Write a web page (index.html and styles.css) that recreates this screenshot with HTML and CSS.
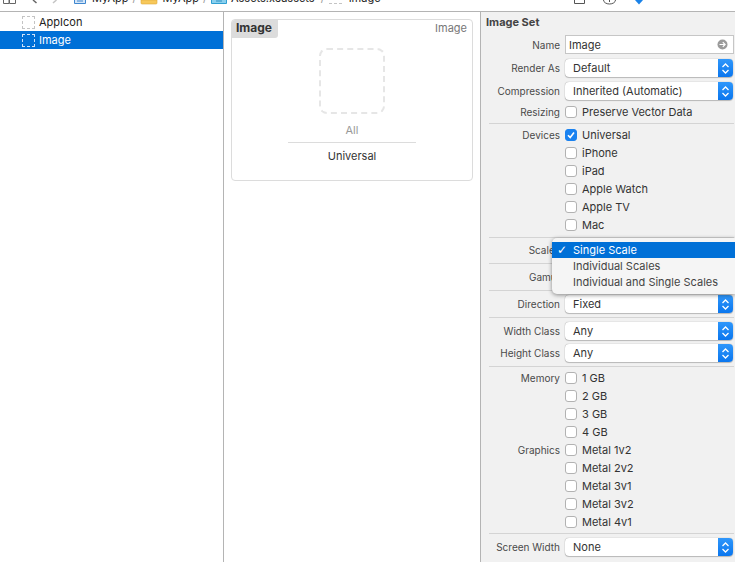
FILE: index.html
```html
<!DOCTYPE html>
<html lang="en">
<head>
<meta charset="utf-8">
<title>Image Set</title>
<link rel="stylesheet" href="styles.css">
</head>
<body>
<div class="app">
  <header class="topbar">
    <div class="crumbs">
      <svg class="ic-grid" width="18" height="11" viewBox="0 0 18 11"><path d="M3.500 0v3.500h5.500V0M9.500 0v3.500h6V0" fill="none" stroke="#666"/></svg>
      <svg class="ic-back" width="8" height="11" viewBox="0 0 8 11"><path d="M2 0 5.500 3" fill="none" stroke="#666" stroke-width="1.500"/></svg>
      <svg class="ic-fwd" width="8" height="11" viewBox="0 0 8 11"><path d="M5.500 0 2 3" fill="none" stroke="#c4c4c4" stroke-width="1.500"/></svg>
      <svg class="ic-doc" width="14" height="11" viewBox="0 0 14 11"><path d="M1.500 0v3.500h11V0" fill="#d5e6f8" stroke="#3f87cf"/><path d="M4 1h6" stroke="#3f87cf"/></svg>
      <span class="crumb c1">MyApp</span><span class="sep s1">/</span>
      <svg class="ic-folder" width="20" height="11" viewBox="0 0 20 11"><path d="M1 0h16v3a1 1 0 0 1-1 1H2a1 1 0 0 1-1-1z" fill="#f7c85a" stroke="#dda93a" stroke-width=".6"/></svg>
      <span class="crumb c2">MyApp</span><span class="sep s2">/</span>
      <svg class="ic-assets" width="16" height="11" viewBox="0 0 16 11"><path d="M.5 0v3.500h15V0" fill="#8ad0ee" stroke="#2f9fd2"/><path d="M5 1h6" stroke="#2f8fc2"/></svg>
      <span class="crumb c3">Assets.xcassets</span><span class="sep s3">/</span>
      <svg class="ic-dash" width="16" height="11" viewBox="0 0 16 11"><path d="M1 3.500h14" stroke="#c4c4c4" stroke-dasharray="3 2"/></svg>
      <span class="crumb c4">Image</span>
    </div>
    <div class="tabs">
      <svg width="11" height="6" viewBox="0 0 11 6"><path d="M.5 0v3.500h10V0" fill="none" stroke="#555"/></svg>
      <svg width="13" height="6" viewBox="0 0 13 6"><path d="M.5 0a6 4 0 0 0 12 0" fill="none" stroke="#555"/><path d="M6.500 0v2" stroke="#555"/></svg>
      <svg width="10" height="6" viewBox="0 0 10 6"><path d="M1 0h8L5 4.500z" fill="#1a82e8"/></svg>
    </div>
  </header>
  <div class="main">
    <nav class="sidebar">
      <div class="asset"><span class="thumb"></span>AppIcon</div>
      <div class="asset selected"><span class="thumb"></span>Image</div>
    </nav>
    <section class="canvas">
      <div class="card">
        <div class="card-head"><span class="tag">Image</span><span class="kind">Image</span></div>
        <div class="well"></div>
        <div class="slot">All</div>
        <div class="idiom">Universal</div>
      </div>
    </section>
    <aside class="inspector">
      <h2 class="title">Image Set</h2>
      <div class="group first">
        <div class="row r-name"><label>Name</label><div class="field">Image<svg class="go" width="11" height="11" viewBox="0 0 11 11"><circle cx="5.500" cy="5.500" r="5" fill="#9a9a9a"/><path d="M2.500 5.500h5.500M5.800 3.200l2.300 2.300-2.300 2.300" fill="none" stroke="#fff" stroke-width="1.200"/></svg></div></div>
        <div class="row r-sel"><label>Render As</label><div class="select">Default<span class="stepper"><svg width="9" height="13" viewBox="0 0 9 13"><path d="M1.500 5 4.500 2l3 3M1.500 8l3 3 3-3" fill="none" stroke="#fff" stroke-width="1.300"/></svg></span></div></div>
        <div class="row r-sel"><label>Compression</label><div class="select">Inherited (Automatic)<span class="stepper"><svg width="9" height="13" viewBox="0 0 9 13"><path d="M1.500 5 4.500 2l3 3M1.500 8l3 3 3-3" fill="none" stroke="#fff" stroke-width="1.300"/></svg></span></div></div>
        <div class="row r-check r-resize"><label>Resizing</label><span class="box"></span><span>Preserve Vector Data</span></div>
      </div>
      <div class="group devices">
        <div class="row r-check"><label>Devices</label><span class="box on"><svg width="10" height="10" viewBox="0 0 10 10"><path d="M2 5.200 4.200 7.500 8 2.500" fill="none" stroke="#fff" stroke-width="1.600"/></svg></span><span>Universal</span></div>
        <div class="row r-check"><label></label><span class="box"></span><span>iPhone</span></div>
        <div class="row r-check"><label></label><span class="box"></span><span>iPad</span></div>
        <div class="row r-check"><label></label><span class="box"></span><span>Apple Watch</span></div>
        <div class="row r-check"><label></label><span class="box"></span><span>Apple TV</span></div>
        <div class="row r-check"><label></label><span class="box"></span><span>Mac</span></div>
      </div>
      <div class="group scale"><div class="row"><label>Scales</label></div></div>
      <div class="group"><div class="row"><label>Gamut</label></div></div>
      <div class="group"><div class="row r-sel"><label>Direction</label><div class="select">Fixed<span class="stepper"><svg width="9" height="13" viewBox="0 0 9 13"><path d="M1.500 5 4.500 2l3 3M1.500 8l3 3 3-3" fill="none" stroke="#fff" stroke-width="1.300"/></svg></span></div></div></div>
      <div class="group">
        <div class="row r-sel"><label>Width Class</label><div class="select">Any<span class="stepper"><svg width="9" height="13" viewBox="0 0 9 13"><path d="M1.500 5 4.500 2l3 3M1.500 8l3 3 3-3" fill="none" stroke="#fff" stroke-width="1.300"/></svg></span></div></div>
        <div class="row r-sel"><label>Height Class</label><div class="select">Any<span class="stepper"><svg width="9" height="13" viewBox="0 0 9 13"><path d="M1.500 5 4.500 2l3 3M1.500 8l3 3 3-3" fill="none" stroke="#fff" stroke-width="1.300"/></svg></span></div></div>
      </div>
      <div class="group memory">
        <div class="row r-check"><label>Memory</label><span class="box"></span><span>1 GB</span></div>
        <div class="row r-check"><label></label><span class="box"></span><span>2 GB</span></div>
        <div class="row r-check"><label></label><span class="box"></span><span>3 GB</span></div>
        <div class="row r-check"><label></label><span class="box"></span><span>4 GB</span></div>
        <div class="row r-check"><label>Graphics</label><span class="box"></span><span>Metal 1v2</span></div>
        <div class="row r-check"><label></label><span class="box"></span><span>Metal 2v2</span></div>
        <div class="row r-check"><label></label><span class="box"></span><span>Metal 3v1</span></div>
        <div class="row r-check"><label></label><span class="box"></span><span>Metal 3v2</span></div>
        <div class="row r-check"><label></label><span class="box"></span><span>Metal 4v1</span></div>
      </div>
      <div class="group"><div class="row r-sel"><label>Screen Width</label><div class="select">None<span class="stepper"><svg width="9" height="13" viewBox="0 0 9 13"><path d="M1.500 5 4.500 2l3 3M1.500 8l3 3 3-3" fill="none" stroke="#fff" stroke-width="1.300"/></svg></span></div></div></div>
    </aside>
  </div>
  <div class="menu">
    <div class="item active"><span class="tick">✓</span>Single Scale</div>
    <div class="item">Individual Scales</div>
    <div class="item">Individual and Single Scales</div>
  </div>
</div>
</body>
</html>
```
FILE: styles.css
```css
* { box-sizing: border-box; }
html, body { margin: 0; padding: 0; }
body { width: 735px; height: 562px; overflow: hidden; background: #fff; font-family: Inter, "Liberation Sans", sans-serif; font-size: 11px; color: #2b2b2b; }
.app { position: relative; width: 735px; height: 562px; display: flex; flex-direction: column; overflow: hidden; }
.topbar { height: 12px; flex: none; border-bottom: 1px solid #b4b4b4; display: flex; justify-content: space-between; overflow: hidden; background: #fff; }
.crumbs { display: flex; align-items: flex-start; }
.crumbs svg { flex: none; }
.crumb { font-size: 11px; line-height: 11px; margin-top: -7px; color: #222; }
.sep { line-height: 11px; margin-top: -7px; color: #999; }
.ic-back { margin-left: 13px; }
.ic-fwd { margin-left: 12px; }
.ic-doc { margin-left: 14px; }
.c1 { margin-left: 5px; }
.s1 { margin-left: 4px; }
.ic-folder { margin-left: 4px; }
.c2 { margin-left: 2px; }
.s2 { margin-left: 4px; }
.ic-assets { margin-left: 4px; }
.c3 { margin-left: 4px; }
.s3 { margin-left: 6px; }
.ic-dash { margin-left: 3px; }
.c4 { margin-left: 5px; }
.tabs { display: flex; gap: 18px; margin-right: 91px; align-items: flex-start; }
.main { flex: 1; display: flex; min-height: 0; }
.sidebar { width: 224px; flex: none; border-right: 1px solid #b4b4b4; padding-top: 1px; }
.asset { height: 18px; display: flex; align-items: center; color: #222; font-size: 11px; padding-left: 22px; }
.asset.selected { background: #0070d7; color: #fff; }
.thumb { width: 13px; height: 13px; margin-right: 4px; border: 1px dashed #c4c4c4; }
.selected .thumb { border-color: #cfe2f7; }
.canvas { flex: 1; background: #fff; padding: 7px 7px 0 7px; border-right: 1px solid #b4b4b4; }
.card { height: 162px; width: 242px; border: 1px solid #dcdcdc; border-radius: 4px; display: flex; flex-direction: column; align-items: center; }
.card-head { align-self: stretch; display: flex; justify-content: space-between; align-items: flex-start; height: 28px; }
.tag { background: #dcdcdc; font-weight: 700; font-size: 12px; color: #333; height: 18px; line-height: 16px; padding: 0 6px 0 4px; border-radius: 3px 0 3px 0; }
.kind { font-size: 11px; color: #777; line-height: 16px; padding-right: 5px; }
.well { width: 66px; height: 66px; border: 2px dashed #e6e6e6; border-radius: 8px; flex: none; }
.slot { margin-top: 9px; width: 128px; height: 20px; text-align: center; color: #999; border-bottom: 1px solid #dcdcdc; line-height: 15px; }
.idiom { margin-top: 6px; color: #333; line-height: 15px; }
.inspector { width: 255px; flex: none; background: #f1f1f1; }
.title { margin: 0; padding: 3px 0 0 5px; height: 23px; font-size: 11px; line-height: 14px; font-weight: 700; color: #444; }
.group { margin: 0 2px 0 8px; border-top: 1px solid #d4d4d4; padding: 4px 0; }
.group.first { border-top: 0; padding: 0 0 2px; }
.group.devices { padding: 2px 0 3px; }
.group.scale { padding: 3px 0 4px; }
.group.memory { padding: 2px 0; }
.row { display: flex; align-items: center; height: 18px; margin-left: -8px; white-space: nowrap; color: #333; }
.row label { width: 79px; text-align: right; margin-right: 5px; flex: none; color: #4a4a4a; font-size: 10px; }
.r-name { height: 19px; margin-bottom: 5px; }
.r-sel + .r-sel { margin-top: 5px; }
.group:not(.first) .r-sel + .r-sel { margin-top: 4px; }
.r-resize { margin-top: 3px; }
.field { width: 170px; height: 19px; border: 1px solid #c6c6c6; background: #fff; display: flex; align-items: center; justify-content: space-between; padding: 0 5px 0 3px; color: #333; }
.select { width: 168px; height: 18px; background: #fff; border-radius: 4px; box-shadow: 0 0 1px rgba(0,0,0,.45), 0 1px 1px rgba(0,0,0,.2); display: flex; align-items: center; justify-content: space-between; padding-left: 8px; overflow: hidden; color: #333; }
.stepper { width: 15px; height: 18px; background: linear-gradient(#2f97fb, #0a76ee); display: flex; align-items: center; justify-content: center; }
.box { width: 12px; height: 12px; flex: none; margin-right: 5px; background: #fff; border: 1px solid #b2b2b2; border-radius: 3px; display: flex; align-items: center; justify-content: center; }
.box.on { background: #1a82f0; border-color: #1a82f0; }
.menu { position: absolute; left: 552px; top: 238px; width: 183px; height: 56px; background: #f5f5f5; border-radius: 5px 0 0 5px; box-shadow: 0 1px 4px rgba(0,0,0,.45); padding-top: 4px; }
.item { height: 16px; line-height: 16px; padding-left: 21px; color: #444; position: relative; white-space: nowrap; }
.item.active { background: #0070d7; color: #fff; }
.tick { position: absolute; left: 5px; top: 0; font-family: "DejaVu Sans", sans-serif; font-size: 12px; font-weight: 700; }
```
